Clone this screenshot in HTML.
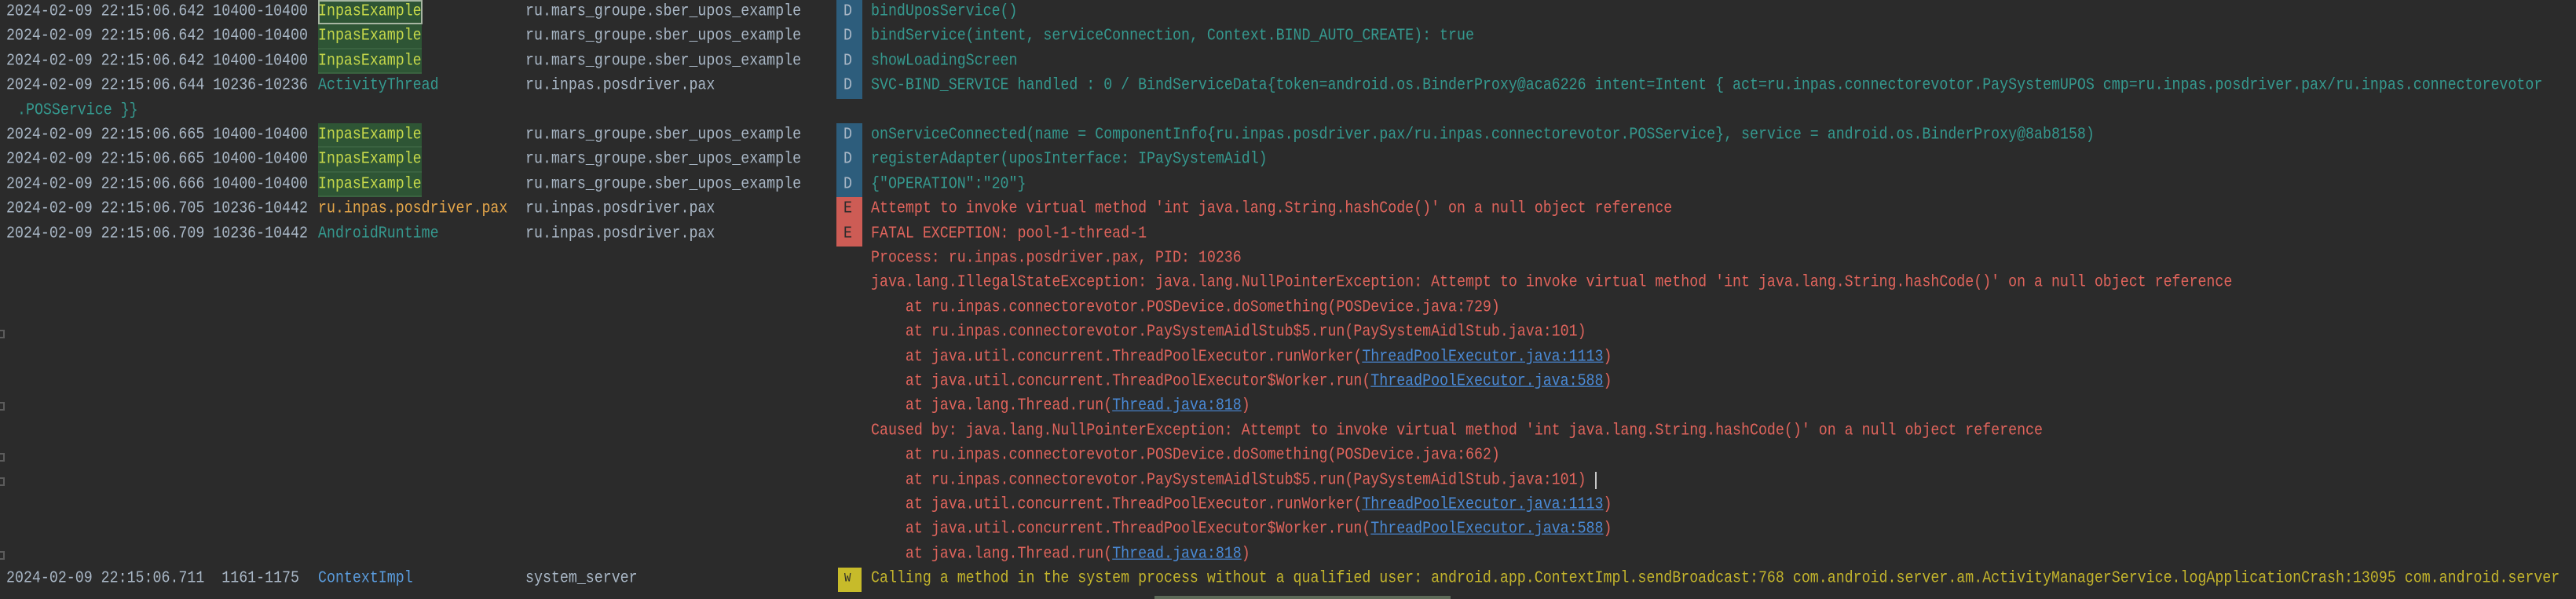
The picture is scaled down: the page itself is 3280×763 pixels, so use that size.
<!DOCTYPE html>
<html><head><meta charset="utf-8"><style>
html,body{margin:0;padding:0;background:#2b2b2b;width:3280px;height:763px;overflow:hidden}
body{position:relative;font-family:"Liberation Mono",monospace;font-size:18.3px;color:#a9b7c6}
.r{position:absolute;left:0;width:3280px;height:31.4px;line-height:31.4px;white-space:pre;transform:scaleY(1.15);transform-origin:50% 50%}
.r span{position:absolute;top:0}
.ts{left:8px;color:#a9b7c6}
.tag{left:405px}
.pk{left:669px;color:#a9b7c6}
.msg{left:1109px}
.d{color:#35998f}
.e{color:#e0645c}
.w{color:#c3b42c}
.ie{color:#c6d84a}
.gbox{position:absolute;left:405px;width:132px;background:#2e5535;border-bottom:2px solid #3a6240}
.badge{position:absolute;left:1065px;width:33px;text-align:center;line-height:31.4px;color:#1f2a33}
.lk{color:#4a8ad6;text-decoration:underline}
.ic{position:absolute;left:0;width:6px;height:11px;border:2px solid #5c5c5c;border-left:none;box-sizing:border-box}
</style></head><body>

<div class="gbox" style="top:0;height:31.4px;border:2px solid #a7b5a2;box-sizing:border-box;width:133px"></div>
<div class="gbox" style="top:31.4px;height:31.4px;box-sizing:border-box"></div>
<div class="gbox" style="top:62.8px;height:31.4px;box-sizing:border-box"></div>
<div class="gbox" style="top:157px;height:31.4px;box-sizing:border-box"></div>
<div class="gbox" style="top:188.4px;height:31.4px;box-sizing:border-box"></div>
<div class="gbox" style="top:219.8px;height:31.4px;box-sizing:border-box"></div>

<div class="badge" style="top:0;height:125.6px;background:#2d5d7c"></div>
<div class="badge" style="top:157px;height:94.2px;background:#2d5d7c"></div>
<div class="badge" style="top:251.2px;height:62.8px;background:#cd5c55"></div>
<div class="badge" style="top:723px;height:31.4px;left:1067px;width:30px;background:#c7bb2a"></div>

<div class="r" style="top:0"><span class="ts">2024-02-09 22:15:06.642 10400-10400</span><span class="tag ie">InpasExample</span><span class="pk">ru.mars_groupe.sber_upos_example</span><span style="left:1074px;color:#a9b7c6">D</span><span class="msg d">bindUposService()</span></div>
<div class="r" style="top:31.4px"><span class="ts">2024-02-09 22:15:06.642 10400-10400</span><span class="tag ie">InpasExample</span><span class="pk">ru.mars_groupe.sber_upos_example</span><span style="left:1074px;color:#a9b7c6">D</span><span class="msg d">bindService(intent, serviceConnection, Context.BIND_AUTO_CREATE): true</span></div>
<div class="r" style="top:62.8px"><span class="ts">2024-02-09 22:15:06.642 10400-10400</span><span class="tag ie">InpasExample</span><span class="pk">ru.mars_groupe.sber_upos_example</span><span style="left:1074px;color:#a9b7c6">D</span><span class="msg d">showLoadingScreen</span></div>
<div class="r" style="top:94.2px"><span class="ts">2024-02-09 22:15:06.644 10236-10236</span><span class="tag d">ActivityThread</span><span class="pk">ru.inpas.posdriver.pax</span><span style="left:1074px;color:#a9b7c6">D</span><span class="msg d">SVC-BIND_SERVICE handled : 0 / BindServiceData{token=android.os.BinderProxy@aca6226 intent=Intent { act=ru.inpas.connectorevotor.PaySystemUPOS cmp=ru.inpas.posdriver.pax/ru.inpas.connectorevotor</span></div>
<div class="r" style="top:125.6px"><span class="d" style="left:22px">.POSService }}</span></div>
<div class="r" style="top:157px"><span class="ts">2024-02-09 22:15:06.665 10400-10400</span><span class="tag ie">InpasExample</span><span class="pk">ru.mars_groupe.sber_upos_example</span><span style="left:1074px;color:#a9b7c6">D</span><span class="msg d">onServiceConnected(name = ComponentInfo{ru.inpas.posdriver.pax/ru.inpas.connectorevotor.POSService}, service = android.os.BinderProxy@8ab8158)</span></div>
<div class="r" style="top:188.4px"><span class="ts">2024-02-09 22:15:06.665 10400-10400</span><span class="tag ie">InpasExample</span><span class="pk">ru.mars_groupe.sber_upos_example</span><span style="left:1074px;color:#a9b7c6">D</span><span class="msg d">registerAdapter(uposInterface: IPaySystemAidl)</span></div>
<div class="r" style="top:219.8px"><span class="ts">2024-02-09 22:15:06.666 10400-10400</span><span class="tag ie">InpasExample</span><span class="pk">ru.mars_groupe.sber_upos_example</span><span style="left:1074px;color:#a9b7c6">D</span><span class="msg d">{"OPERATION":"20"}</span></div>
<div class="r" style="top:251.2px"><span class="ts">2024-02-09 22:15:06.705 10236-10442</span><span class="tag" style="color:#e5a64a">ru.inpas.posdriver.pax</span><span class="pk">ru.inpas.posdriver.pax</span><span style="left:1074px;color:#2b2b2b">E</span><span class="msg e">Attempt to invoke virtual method 'int java.lang.String.hashCode()' on a null object reference</span></div>
<div class="r" style="top:282.6px"><span class="ts">2024-02-09 22:15:06.709 10236-10442</span><span class="tag d">AndroidRuntime</span><span class="pk">ru.inpas.posdriver.pax</span><span style="left:1074px;color:#2b2b2b">E</span><span class="msg e">FATAL EXCEPTION: pool-1-thread-1</span></div>
<div class="r" style="top:314px"><span class="msg e">Process: ru.inpas.posdriver.pax, PID: 10236</span></div>
<div class="r" style="top:345.4px"><span class="msg e">java.lang.IllegalStateException: java.lang.NullPointerException: Attempt to invoke virtual method 'int java.lang.String.hashCode()' on a null object reference</span></div>
<div class="r" style="top:376.8px"><span class="msg e">    at ru.inpas.connectorevotor.POSDevice.doSomething(POSDevice.java:729)</span></div>
<div class="r" style="top:408.2px"><span class="msg e">    at ru.inpas.connectorevotor.PaySystemAidlStub$5.run(PaySystemAidlStub.java:101)</span></div>
<div class="r" style="top:439.6px"><span class="msg e">    at java.util.concurrent.ThreadPoolExecutor.runWorker(<span class="lk" style="position:static">ThreadPoolExecutor.java:1113</span>)</span></div>
<div class="r" style="top:471px"><span class="msg e">    at java.util.concurrent.ThreadPoolExecutor$Worker.run(<span class="lk" style="position:static">ThreadPoolExecutor.java:588</span>)</span></div>
<div class="r" style="top:502.4px"><span class="msg e">    at java.lang.Thread.run(<span class="lk" style="position:static">Thread.java:818</span>)</span></div>
<div class="r" style="top:533.8px"><span class="msg e">Caused by: java.lang.NullPointerException: Attempt to invoke virtual method 'int java.lang.String.hashCode()' on a null object reference</span></div>
<div class="r" style="top:565.2px"><span class="msg e">    at ru.inpas.connectorevotor.POSDevice.doSomething(POSDevice.java:662)</span></div>
<div class="r" style="top:596.6px"><span class="msg e">    at ru.inpas.connectorevotor.PaySystemAidlStub$5.run(PaySystemAidlStub.java:101)</span></div>
<div class="r" style="top:628px"><span class="msg e">    at java.util.concurrent.ThreadPoolExecutor.runWorker(<span class="lk" style="position:static">ThreadPoolExecutor.java:1113</span>)</span></div>
<div class="r" style="top:659.4px"><span class="msg e">    at java.util.concurrent.ThreadPoolExecutor$Worker.run(<span class="lk" style="position:static">ThreadPoolExecutor.java:588</span>)</span></div>
<div class="r" style="top:690.8px"><span class="msg e">    at java.lang.Thread.run(<span class="lk" style="position:static">Thread.java:818</span>)</span></div>
<div class="r" style="top:722.2px"><span class="ts">2024-02-09 22:15:06.711  1161-1175 </span><span class="tag" style="color:#5a9bdc">ContextImpl</span><span class="pk">system_server</span><span style="left:1075px;color:#2b2b2b;font-size:14px">W</span><span class="msg w">Calling a method in the system process without a qualified user: android.app.ContextImpl.sendBroadcast:768 com.android.server.am.ActivityManagerService.logApplicationCrash:13095 com.android.server</span></div>

<div style="position:absolute;left:2031px;top:601px;width:2px;height:22px;background:#c8c8c8"></div>
<div class="ic" style="top:420px"></div>
<div class="ic" style="top:512px"></div>
<div class="ic" style="top:577px"></div>
<div class="ic" style="top:608px"></div>
<div class="ic" style="top:702px"></div>
<div style="position:absolute;left:1470px;top:759px;width:377px;height:4px;background:#5d6a58"></div>
</body></html>
